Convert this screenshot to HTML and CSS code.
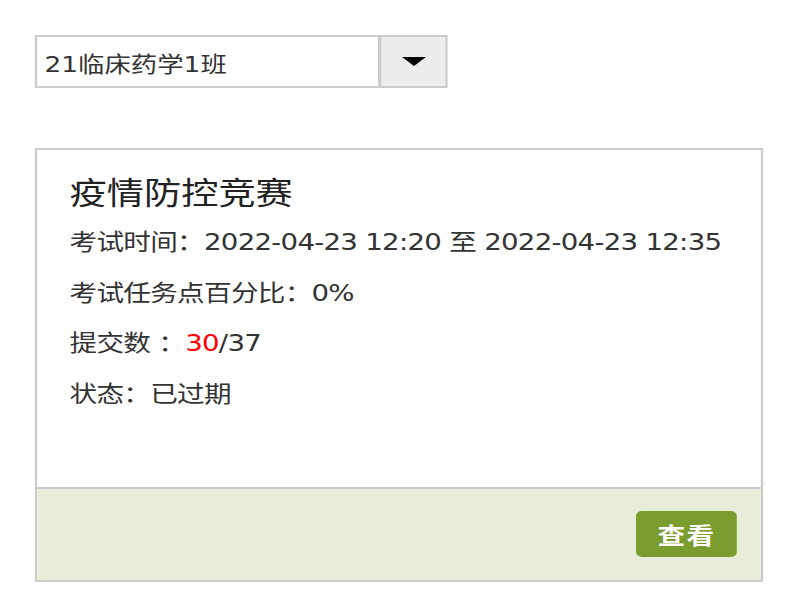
FILE: index.html
```html
<!DOCTYPE html>
<html lang="zh-CN">
<head>
  <meta charset="UTF-8" />
  <meta name="viewport" content="width=device-width, initial-scale=1.0" />
  <title>考试列表</title>
  <link rel="stylesheet" href="styles.css">
</head>
<body>
  <div class="page">
    <div class="class-select">
      <div class="class-select-text">21临床药学1班</div>
      <div class="class-select-btn"><span class="caret"></span></div>
    </div>

    <div class="exam-card">
      <div class="exam-body">
        <h2 class="exam-title">疫情防控竞赛</h2>
        <p class="exam-line">考试时间：2022-04-23 12:20 至 2022-04-23 12:35</p>
        <p class="exam-line">考试任务点百分比：0%</p>
        <p class="exam-line">提交数 ：<span class="num-red">30</span>/37</p>
        <p class="exam-line">状态：<span class="status">已过期</span></p>
      </div>
      <div class="exam-footer">
        <button class="btn-view">查看</button>
      </div>
    </div>
  </div>
</body>
</html>
```

FILE: styles.css
```css
html, body {
  margin: 0;
  padding: 0;
  overflow: hidden;
  background-color: #fff;
}

body {
  font-family: "DejaVu Sans", "Noto Sans CJK SC", sans-serif;
  color: #333;
}

/* la captura original esta estirada en horizontal */
.page {
  width: 666px;
  padding: 35px 0 0 29px;
  box-sizing: border-box;
  transform: scaleX(1.2);
  transform-origin: 0 0;
}

.class-select {
  display: flex;
  width: 344px;
  height: 53px;
  border: 2px solid #ccc;
  box-sizing: border-box;
}

.class-select-text {
  flex: 1;
  display: flex;
  align-items: center;
  padding-left: 6px;
  font-size: 22px;
  color: #333;
  border-right: 3px solid #ccc;
}

.class-select-btn {
  width: 53px;
  display: flex;
  align-items: center;
  justify-content: center;
  background-color: #ececec;
}

.caret {
  width: 0;
  height: 0;
  border-left: 10px solid transparent;
  border-right: 10px solid transparent;
  border-top: 9px solid #000;
}

.exam-card {
  width: 607px;
  margin-top: 60px;
  border: 2px solid #ccc;
  box-sizing: border-box;
}

.exam-body {
  padding: 22px 20px 68px 27px;
}

.exam-title {
  margin: 0 0 3px 0;
  font-size: 31px;
  font-weight: normal;
  line-height: 42px;
  color: #222;
}

.exam-line {
  margin: 0;
  font-size: 23px;
  letter-spacing: -0.6px;
  line-height: 50.5px;
  white-space: nowrap;
  color: #333;
}

.num-red {
  color: #f00;
}

.exam-footer {
  display: flex;
  justify-content: flex-end;
  padding: 22px 20px 23px;
  background-color: #e8edda;
  border-top: 2px solid #ccc;
}

.btn-view {
  width: 84px;
  height: 46px;
  border: none;
  border-radius: 5px;
  background-color: #7b9d2f;
  color: #fff;
  font-family: "Noto Sans CJK SC", sans-serif;
  font-size: 23px;
  font-weight: bold;
  letter-spacing: 1px;
  cursor: pointer;
}
```
